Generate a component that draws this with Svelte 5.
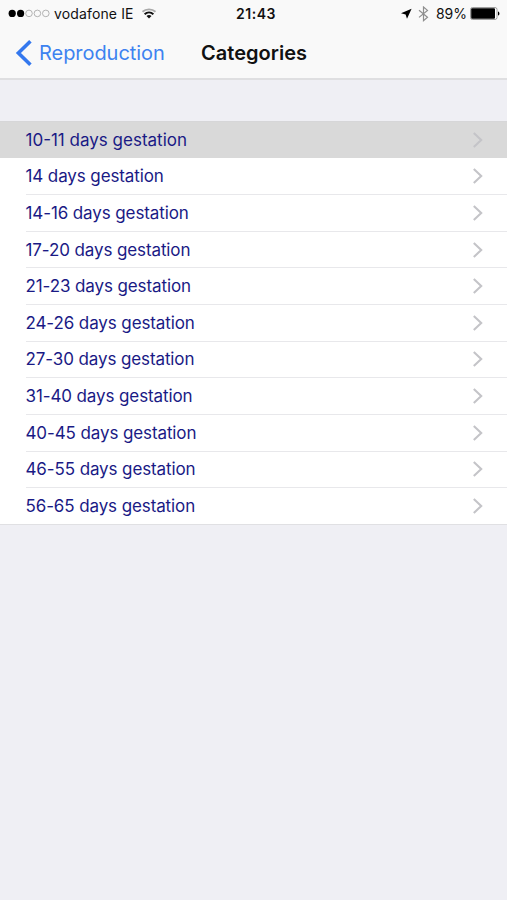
<script>
    let categories = [
        "10-11 days gestation",
        "14 days gestation",
        "14-16 days gestation",
        "17-20 days gestation",
        "21-23 days gestation",
        "24-26 days gestation",
        "27-30 days gestation",
        "31-40 days gestation",
        "40-45 days gestation",
        "46-55 days gestation",
        "56-65 days gestation",
    ];

    let selected = $state(0);
</script>

<div class="screen">
    <header>
        <div class="status">
            <div class="carrier">
                <svg width="42" height="10" viewBox="0 0 42 10" aria-hidden="true">
                    {#each [0, 1, 2, 3, 4] as dot}
                        <circle
                            class:empty={dot > 1}
                            cx={4.2 + dot * 8.4}
                            cy="4.4"
                            r={dot > 1 ? 3.3 : 3.6}
                        />
                    {/each}
                </svg>
                <span class="name">vodafone IE</span>
                <svg class="wifi" width="16" height="12" viewBox="0 0 16 12" aria-hidden="true">
                    <path class="faint" d="M1.5 3.8C5 .5 11 .5 14.5 3.8" />
                    <path d="M3.6 6.2C6.2 3.8 9.8 3.8 12.4 6.2" />
                    <path class="tip" d="M5.5 8C7 6.8 9 6.8 10.5 8L8 10.6Z" />
                </svg>
            </div>
            <span class="time">21:43</span>
            <div class="indicators">
                <svg width="12" height="12" viewBox="0 0 12 12" aria-hidden="true">
                    <path d="M11.6 .8L1 5.2 5.6 6.4 7 10.8Z" />
                </svg>
                <svg class="bluetooth" width="11" height="16" viewBox="0 0 11 16" aria-hidden="true">
                    <path d="M1 4.2l8.5 7-4 3.4V1l4 3.4L1 11.4" />
                </svg>
                <span class="percent">89%</span>
                <svg class="battery" width="30" height="13" viewBox="0 0 30 13" aria-hidden="true">
                    <rect class="shell" x=".5" y=".5" width="26.5" height="12" rx="2" />
                    <rect x="1.2" y="1.2" width="23.8" height="10.6" rx="1" />
                    <path d="M28 4.4c1.9.6 1.9 3.6 0 4.2Z" />
                </svg>
            </div>
        </div>
        <nav>
            <button class="back">
                <svg width="18" height="28" viewBox="0 0 18 28" aria-hidden="true">
                    <path d="M15.4 2.3L3.4 14l12 11.7" />
                </svg>
                <span>Reproduction</span>
            </button>
            <h1>Categories</h1>
        </nav>
    </header>

    <ul>
        {#each categories as category, index}
            <li>
                <button
                    class="row"
                    class:selected={selected === index}
                    onclick={() => (selected = index)}
                >
                    <span class="cell">
                        <span class="label">{category}</span>
                        <svg width="12" height="18" viewBox="0 0 12 18" aria-hidden="true">
                            <path d="M1.8 2l7.4 7-7.4 7" />
                        </svg>
                    </span>
                </button>
            </li>
        {/each}
    </ul>
</div>

<style>
    :global(body) {
        background: #efeff4;
    }

    .screen {
        min-height: 900px;
        background: #efeff4;
        font-family: Inter, "Liberation Sans", sans-serif;
        color: #111;
    }

    header {
        box-sizing: border-box;
        height: 80px;
        background: #f9f9f9;
        border-bottom: 2px solid #dfdfe1;
    }

    .status {
        height: 27px;
        display: grid;
        grid-template-columns: 1fr auto 1fr;
        align-items: center;
        padding: 0 6px 0 8px;
        font-size: 14px;
    }

    .carrier,
    .indicators {
        display: flex;
        align-items: center;
    }

    .indicators {
        justify-content: flex-end;
    }

    .name {
        margin-left: 4px;
        letter-spacing: 0.14px;
    }

    .empty {
        fill: none;
        stroke: #aaa;
        stroke-width: 0.9;
    }

    .wifi {
        margin-left: 7px;
        fill: none;
        stroke: #111;
        stroke-width: 1.9;
    }

    .wifi .faint {
        stroke: #aaa;
    }

    .wifi .tip {
        fill: #111;
        stroke: none;
    }

    .time {
        padding-left: 3px;
        font-weight: 600;
        letter-spacing: 0.5px;
    }

    .bluetooth {
        margin-left: 6px;
        fill: none;
        stroke: #8e8e8e;
        stroke-width: 1.2;
    }

    .percent {
        margin: 0 3px 0 7px;
    }

    .battery {
        margin-right: 1px;
    }

    .battery .shell {
        fill: #fff;
        stroke: #888;
        stroke-width: 0.8;
    }

    nav {
        height: 51px;
        display: grid;
        grid-template-columns: 1fr auto 1fr;
        align-items: center;
    }

    button {
        border: 0;
        padding: 0;
        background: none;
        font: inherit;
        text-align: left;
        cursor: pointer;
    }

    .back {
        display: flex;
        align-items: center;
        gap: 6px;
        padding-left: 15px;
        color: #3d82f0;
        font-size: 20px;
        letter-spacing: -0.05px;
    }

    .back path {
        fill: none;
        stroke: #3478ee;
        stroke-width: 3.6;
    }

    h1 {
        margin: 0;
        padding-left: 1px;
        font-size: 20px;
        font-weight: 600;
        letter-spacing: 0.03px;
    }

    ul {
        list-style: none;
        margin: 41px 0 0;
        padding: 0;
        background: #fff;
        border-top: 1px solid #d6d6d8;
    }

    .row {
        display: block;
        width: 100%;
        height: 36.65px;
        padding-left: 25.5px;
        color: #1a1a85;
        font-size: 17px;
        letter-spacing: -0.11px;
    }

    .row.selected {
        height: 36.45px;
        background: #d9d9d9;
        letter-spacing: 0;
    }

    .cell {
        box-sizing: border-box;
        height: 100%;
        display: flex;
        align-items: center;
        justify-content: space-between;
        padding-right: 23px;
        border-bottom: 1px solid #e8e8eb;
    }

    .selected .cell {
        border-bottom-color: transparent;
    }

    li:last-child .row {
        height: 36px;
    }

    li:last-child {
        border-bottom: 1px solid #e0e0e3;
    }

    li:last-child .cell {
        border-bottom: 0;
    }

    .cell path {
        fill: none;
        stroke: #c4c4c8;
        stroke-width: 2.1;
    }
</style>
